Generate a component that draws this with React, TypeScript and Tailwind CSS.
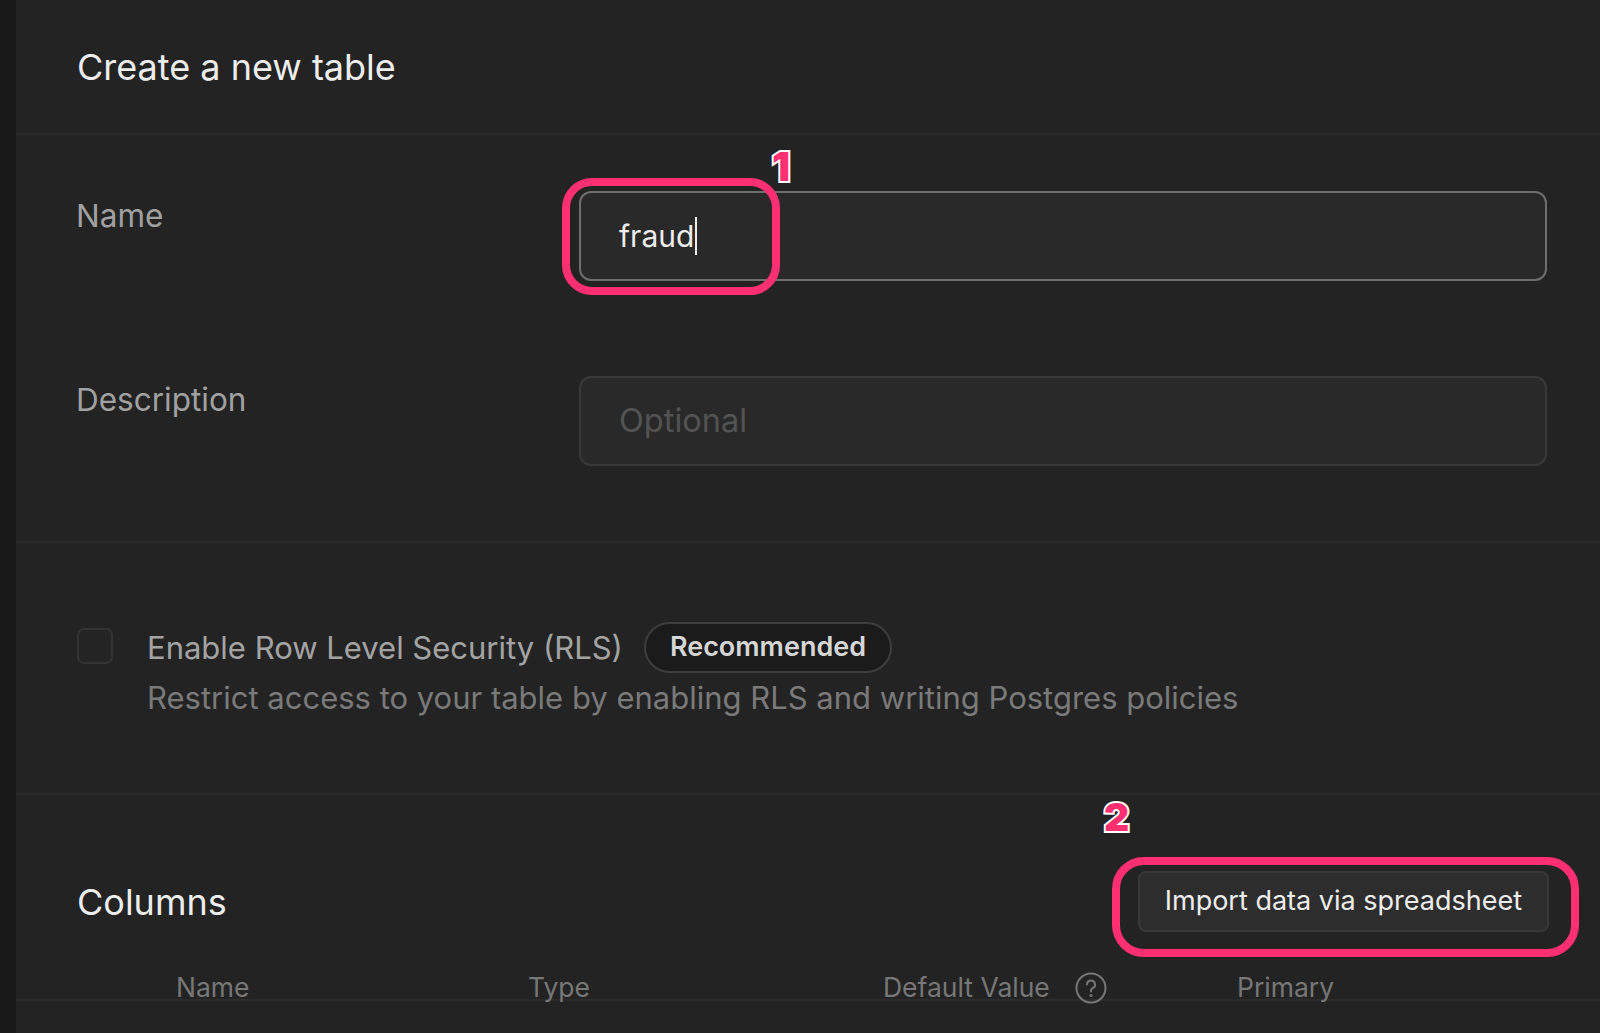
import React from 'react';

const font = { fontFamily: 'Inter, "Noto Sans", sans-serif' };

function Marker({ label, className }: { label: string; className: string }) {
  return (
    <div
      className={`absolute font-black text-[#ff2f72] leading-none [-webkit-text-stroke:4px_white] [paint-order:stroke_fill] ${className}`}
    >
      {label}
    </div>
  );
}

function HelpIcon() {
  return (
    <svg width="32" height="32" viewBox="0 0 32 32" fill="none" stroke="#777" strokeWidth="2">
      <circle cx="16" cy="16" r="14.5" />
      <path d="M12 12.5a4 4 0 1 1 5.6 3.7c-1 .5-1.6 1.3-1.6 2.4v1" strokeLinecap="round" />
      <circle cx="16" cy="23.5" r="0.6" fill="#777" />
    </svg>
  );
}

export default function App() {
  return (
    <div className="relative flex h-[1033px] overflow-hidden bg-[#232323]" style={font}>
      <div className="w-4 shrink-0 bg-[#191919]" />

      <div className="flex flex-1 flex-col">
        {/* Header */}
        <div className="flex h-[135px] items-center border-b-2 border-[#2c2c2c] pl-[61px]">
          <h1 className="text-[36px] leading-none text-[#ededed]">Create a new table</h1>
        </div>

        {/* Name + description */}
        <div className="flex flex-col gap-[95px] border-b-2 border-[#2c2c2c] pb-[75px] pl-[60px] pr-[53px] pt-[56px]">
          <div className="flex">
            <label className="mt-[7px] w-[503px] shrink-0 text-[31.5px] leading-[36px] text-[#a1a1a1]">Name</label>
            <div className="flex h-[90px] flex-1 items-center rounded-[12px] border-2 border-[#6e6e6e] bg-[#292929] px-[38px]">
              <span className="text-[30px] leading-none text-[#ededed]">fraud</span>
              <span className="ml-[1px] inline-block h-[38px] w-[2px] bg-[#ededed]" />
            </div>
          </div>
          <div className="flex">
            <label className="mt-[6px] w-[503px] shrink-0 text-[31.5px] leading-[36px] text-[#a1a1a1]">Description</label>
            <div className="flex h-[90px] flex-1 items-center rounded-[12px] border-2 border-[#393939] bg-[#292929] px-[38px]">
              <span className="text-[32.5px] leading-none text-[#535353]">Optional</span>
            </div>
          </div>
        </div>

        {/* RLS */}
        <div className="flex h-[252px] items-start gap-[34px] border-b-2 border-[#2c2c2c] pl-[61px] pt-[85px]">
          <div className="h-[36px] w-[36px] shrink-0 rounded-[7px] border-2 border-[#333] bg-[#242424]" />
          <div className="-mt-[6px] flex flex-col gap-[7px]">
            <div className="flex items-center gap-[21px]">
              <span className="text-[31px] leading-[36px] text-[#a3a3a3]">Enable Row Level Security (RLS)</span>
              <span className="flex h-[51px] items-center rounded-full border-2 border-[#3e3e3e] bg-[#1b1b1b] px-[24px] text-[27px] font-semibold text-[#d6d6d6]">
                Recommended
              </span>
            </div>
            <span className="text-[31px] leading-[36px] text-[#7a7a7a]">
              Restrict access to your table by enabling RLS and writing Postgres policies
            </span>
          </div>
        </div>

        {/* Columns */}
        <div className="flex flex-col pt-[76px]">
          <div className="flex items-center justify-between pl-[61px] pr-[51px]">
            <h2 className="text-[36px] leading-none text-[#ededed]">Columns</h2>
            <button className="flex h-[61px] items-center rounded-[8px] border-2 border-[#383838] bg-[#2d2d2d] px-[25px] text-[27px] text-[#ededed]">
              Import data via spreadsheet
            </button>
          </div>
          <div className="mt-[40px] grid h-[29px] grid-cols-[352px_355px_354px_1fr] border-b-2 border-[#2c2c2c] pl-[160px] text-[26.5px] leading-[31px] text-[#777]">
            <span>Name</span>
            <span>Type</span>
            <span className="flex items-start gap-[25px]">
              Default Value
              <HelpIcon />
            </span>
            <span>Primary</span>
          </div>
        </div>
      </div>

      {/* Annotations */}
      <div className="absolute left-[562px] top-[178px] h-[117px] w-[218px] rounded-[30px] border-[8px] border-[#ff2f72]" />
      <Marker label="1" className="left-[772px] top-[147px] text-[40px]" />
      <div className="absolute left-[1112px] top-[857px] h-[100px] w-[467px] rounded-[32px] border-[8px] border-[#ff2f72]" />
      <Marker label="2" className="left-[1104px] top-[797px] text-[39px]" />
    </div>
  );
}
